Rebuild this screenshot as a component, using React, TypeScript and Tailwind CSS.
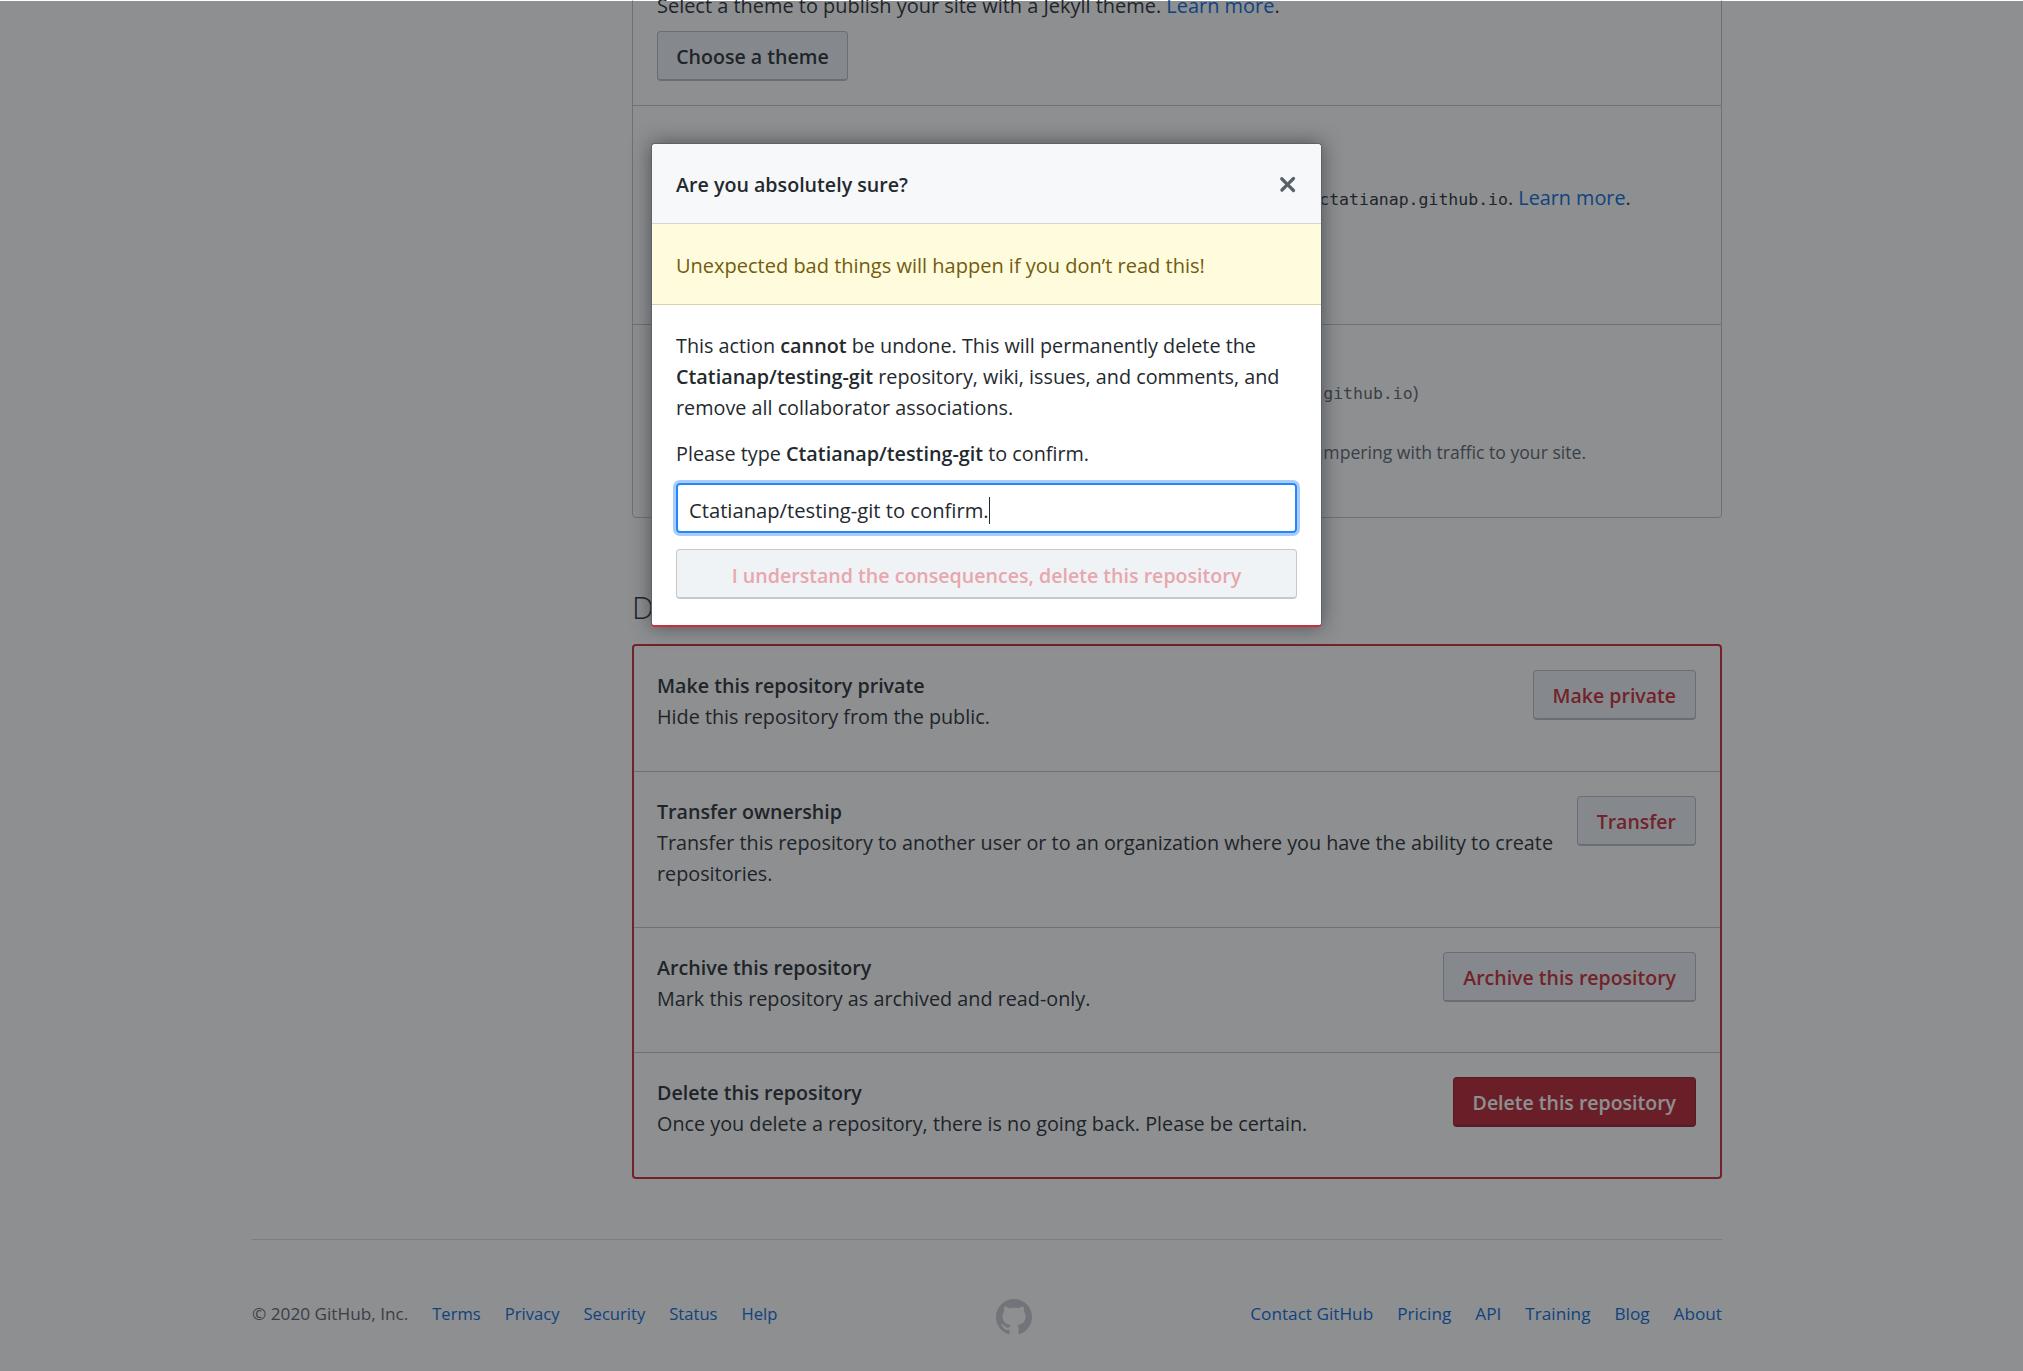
const font = "font-['Open_Sans','Noto_Sans',sans-serif]";
const mono = "font-['DejaVu_Sans_Mono',monospace]";

function MarkGithub({ className }: { className?: string }) {
  return (
    <svg viewBox="0 0 16 16" fill="currentColor" className={className}>
      <path d="M8 0C3.58 0 0 3.58 0 8c0 3.54 2.29 6.53 5.47 7.59.4.07.55-.17.55-.38 0-.19-.01-.82-.01-1.49-2.01.37-2.53-.49-2.69-.94-.09-.23-.48-.94-.82-1.13-.28-.15-.68-.52-.01-.53.63-.01 1.08.58 1.23.82.72 1.21 1.87.87 2.33.66.07-.52.28-.87.51-1.07-1.78-.2-3.64-.89-3.64-3.95 0-.87.31-1.59.82-2.15-.08-.2-.36-1.02.08-2.12 0 0 .67-.21 2.2.82.64-.18 1.32-.27 2-.27s1.36.09 2 .27c1.53-1.04 2.2-.82 2.2-.82.44 1.1.16 1.92.08 2.12.51.56.82 1.27.82 2.15 0 3.07-1.87 3.75-3.65 3.95.29.25.54.73.54 1.48 0 1.07-.01 1.93-.01 2.2 0 .21.15.46.55.38A8.013 8.013 0 0 0 16 8c0-4.42-3.58-8-8-8z" />
    </svg>
  );
}

function CloseIcon() {
  return (
    <svg viewBox="0 0 16 16" fill="currentColor" className="w-[23px] h-[23px]">
      <path d="M3.2 3.2a1.15 1.15 0 0 1 1.6 0L8 6.4l3.2-3.2a1.15 1.15 0 1 1 1.6 1.6L9.6 8l3.2 3.2a1.15 1.15 0 1 1-1.6 1.6L8 9.6l-3.2 3.2a1.15 1.15 0 0 1-1.6-1.6L6.4 8 3.2 4.8a1.15 1.15 0 0 1 0-1.6Z" />
    </svg>
  );
}

const dangerRows = [
  { title: "Make this repository private", desc: "Hide this repository from the public.", action: "Make private" },
  {
    title: "Transfer ownership",
    desc: "Transfer this repository to another user or to an organization where you have the ability to create repositories.",
    action: "Transfer",
  },
  { title: "Archive this repository", desc: "Mark this repository as archived and read-only.", action: "Archive this repository" },
  { title: "Delete this repository", desc: "Once you delete a repository, there is no going back. Please be certain.", action: "Delete this repository", solid: true },
];

const footerLeft = ["Terms", "Privacy", "Security", "Status", "Help"];
const footerRight = ["Contact GitHub", "Pricing", "API", "Training", "Blog", "About"];

function DangerRow({ title, desc, action, solid }: { title: string; desc: string; action: string; solid?: boolean }) {
  return (
    <div className="flex items-start justify-between gap-[18px] pt-6 pb-[38px] first:pb-[39px] pl-[23px] pr-6 border-t border-[#c0c4c9] first:border-t-0 text-[19.8px] leading-[31px]">
      <div className="min-w-0">
        <div className="font-semibold text-[19.65px]">{title}</div>
        <div>{desc}</div>
      </div>
      <button
        className={
          solid
            ? "h-[50px] shrink-0 px-[19px] pt-[2px] rounded-[4px] border border-b-2 border-[#8f1a24] bg-[#b81f2c] text-white font-semibold text-[19.5px]"
            : "h-[50px] shrink-0 px-[19px] pt-[2px] rounded-[4px] border border-b-2 border-[#b9bdc2] bg-[#eff3f6] text-[#cb2431] font-semibold text-[19.5px]"
        }
      >
        {action}
      </button>
    </div>
  );
}

export default function App() {
  return (
    <div className={`${font} relative h-[1371px] overflow-hidden bg-white text-[#24292e]`}>
      <div className="ml-[252px] w-[1470px]">
        <div className="ml-[380px] w-[1090px]">
          {/* the page is scrolled, so the first card starts above the window */}
          <div className="-mt-[68px] border border-[#c0c4c9] rounded-[4px] text-[19.8px] leading-[31px]">
            <div className="px-6 pt-[26px] pb-6 h-[172px]">
              <div className="font-semibold">Theme Chooser</div>
              <p className="text-[19.95px]">
                Select a theme to publish your site with a Jekyll theme. <a className="text-[#0366d6]">Learn more</a>.
              </p>
              <button className="mt-[10px] h-[50px] w-[191px] pt-[2px] rounded-[4px] border border-b-2 border-[#b9bdc2] bg-[#eff3f6] font-semibold text-[19.6px]">
                Choose a theme
              </button>
            </div>
            <div className="h-[219px] border-t border-[#c0c4c9] pl-6 pr-6 pt-[30px]">
              <div className="font-semibold">Custom domain</div>
              <p className="mt-[15px] whitespace-nowrap">
                Custom domains allow you to serve your site from a domain other than{" "}
                <code className={`${mono} text-[16.5px]`}>ctatianap.github.io</code>. <a className="text-[#0366d6]">Learn more</a>.
              </p>
              <div className="mt-4 flex gap-2">
                <div className="w-[400px] h-[50px] border border-[#c0c4c9] rounded-[4px]" />
                <button className="h-[50px] px-5 rounded-[4px] border border-[#b9bdc2] bg-[#eff3f6] font-semibold">Save</button>
              </div>
            </div>
            <div className="h-[193px] border-t border-[#c0c4c9] pl-6 pr-6 pt-[20px]">
              <div className="font-semibold">Enforce HTTPS</div>
              <p className="whitespace-nowrap text-[#586069] text-[18.6px]">
                Required for your site because you are using the default domain (<code className={`${mono} text-[16.5px]`}>ctatianap.github.io</code>)
              </p>
              <p className="mt-7 whitespace-nowrap text-[17.6px] text-[#586069]">
                HTTPS provides a layer of encryption that prevents others from snooping on or tampering with traffic to your site.
              </p>
            </div>
          </div>

          <h2 className="mt-[69px] mb-[17px] text-[31px] leading-[40px] font-light">Danger Zone</h2>
          <div className="border-2 border-[#cb2431] rounded-[4px]">
            {dangerRows.map((r) => (
              <DangerRow key={r.title} {...r} />
            ))}
          </div>
        </div>

        <div className="mt-[60px] border-t border-[#d8dbdf] pt-[58px] flex justify-between text-[#586069] text-[17.2px] leading-[31px]">
          <ul className="flex gap-6">
            <li>© 2020 GitHub, Inc.</li>
            {footerLeft.map((l) => (
              <li key={l} className="text-[#0366d6] text-[16.6px]">{l}</li>
            ))}
          </ul>
          <MarkGithub className="w-9 h-9 mt-[1px] text-[#c6cbd1]" />
          <ul className="flex gap-6">
            {footerRight.map((l) => (
              <li key={l} className="text-[#0366d6]">{l}</li>
            ))}
          </ul>
        </div>
      </div>

      <div className="absolute inset-x-0 top-px bottom-0 bg-[rgba(27,31,35,0.5)]" />

      <div className="absolute left-[651px] top-[143px] w-[671px] rounded-[4px] bg-white border border-b-2 border-[#5f6367] border-b-[#c9303f] shadow-[0_0_20px_rgba(27,31,35,0.55)] text-[19.8px] leading-[31px]">
        <div className="h-[80px] pl-6 pr-[22px] pt-[2px] flex items-center justify-between bg-[#f6f8fa] border-b border-[#d1d5da] rounded-t-[4px]">
          <span className="font-semibold text-[19.65px]">Are you absolutely sure?</span>
          <span className="text-[#586069]"><CloseIcon /></span>
        </div>
        <div className="h-[81px] px-6 pt-[2px] flex items-center bg-[#fffbdd] border-b border-[#d9d0a5] text-[#735c0f] text-[20px]">
          Unexpected bad things will happen if you don’t read this!
        </div>
        <div className="px-6 pt-[25px] pb-[26px]">
          <p>
            This action <strong className="font-semibold">cannot</strong> be undone. This will permanently delete the{" "}
            <strong className="font-semibold">Ctatianap/testing-git</strong> repository, wiki, issues, and comments, and remove all collaborator associations.
          </p>
          <p className="mt-[15px]">
            Please type <strong className="font-semibold">Ctatianap/testing-git</strong> to confirm.
          </p>
          <div className="mt-[14px] h-[50px] px-[11px] pt-[4px] flex items-center rounded-[4px] border-2 border-[#2188ff] ring-[3px] ring-[#a9cdf8] text-[20.2px]">
            <span>Ctatianap/testing-git to confirm.</span>
            <span className="w-px h-[27px] bg-[#24292e]" />
          </div>
          <button className="mt-4 w-full h-[50px] pt-[3px] rounded-[4px] border border-b-2 border-[#c5c9ce] bg-[#eff3f6] text-[#e8a6ad] font-semibold text-[19.6px]">
            I understand the consequences, delete this repository
          </button>
        </div>
      </div>
    </div>
  );
}
